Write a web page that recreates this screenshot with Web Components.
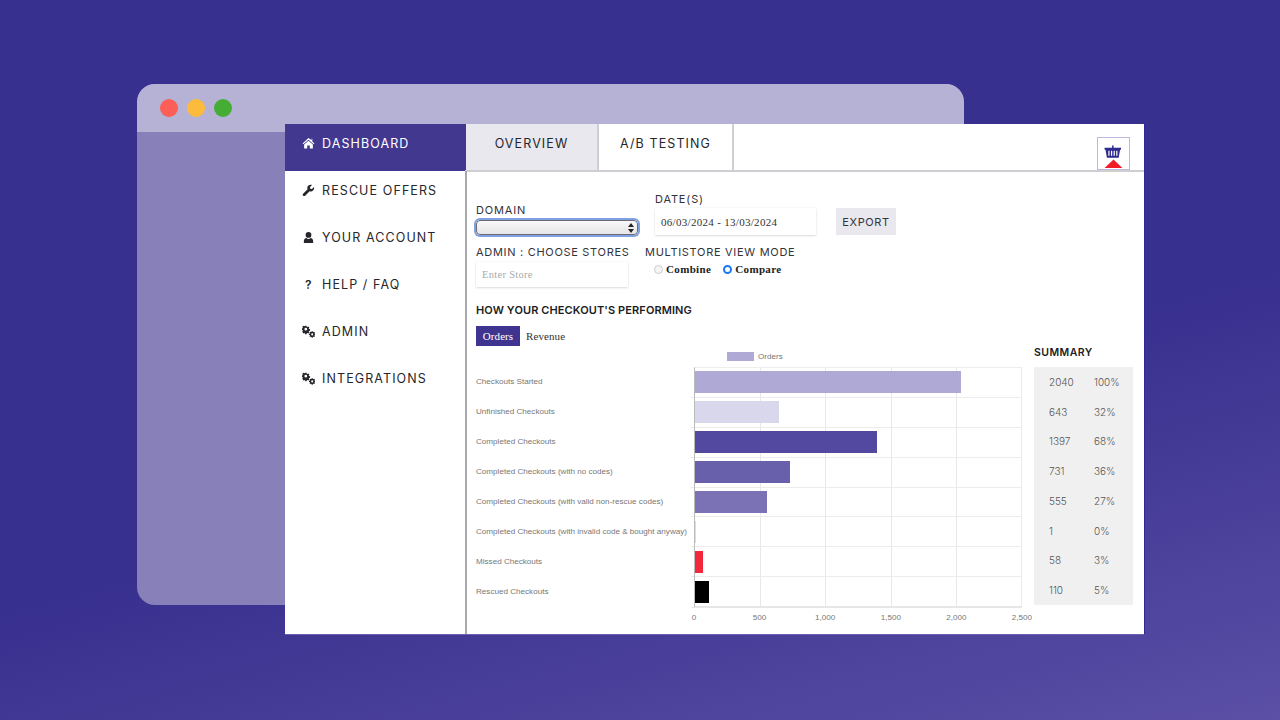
<!DOCTYPE html>
<html><head><meta charset="utf-8">
<style>
html,body{margin:0;padding:0;width:1280px;height:720px;overflow:hidden}
body{background:linear-gradient(165deg,#38308e 0%,#38308e 58%,#5b4fa6 100%);font-family:"Inter","Liberation Sans",sans-serif;position:relative}
</style></head><body>
<desk-window></desk-window>
<app-panel>
  <side-nav slot="side">
    <nav-item active icon="home">DASHBOARD</nav-item>
    <nav-item icon="wrench">RESCUE OFFERS</nav-item>
    <nav-item icon="user">YOUR ACCOUNT</nav-item>
    <nav-item icon="help">HELP / FAQ</nav-item>
    <nav-item icon="cogs">ADMIN</nav-item>
    <nav-item icon="cogs">INTEGRATIONS</nav-item>
  </side-nav>
  <top-tabs slot="tabs"></top-tabs>
  <filter-form slot="main"></filter-form>
  <perf-report slot="main"></perf-report>
</app-panel>
<script>
function el(name,html,cls){customElements.define(name,class extends HTMLElement{
  constructor(){super();this.attachShadow({mode:'open'}).innerHTML=html;}
  connectedCallback(){if(cls)cls.call(this);}
});}
const ICONS={
home:'<path d="M7 1.2 .6 6.9l.8.9L7 3l5.6 4.8.8-.9-2.3-2V1.8H10.300v1.800z"/><path d="M7 4 2.300 8v4.300h3.300V9.200h2.800v3.100h3.300V8z"/>',
wrench:'<path d="M12.900 3.200 10.700 5.300 8.900 5 8.600 3.200 10.800 1.100C9.300.5 7.600.9 6.600 2 5.700 3 5.500 4.400 6 5.600L1.200 10.400c-.6.6-.6 1.600 0 2.200s1.600.6 2.200 0L8.200 7.800c1.200.5 2.700.3 3.700-.7 1.100-1.100 1.400-2.600 1-3.900z"/>',
user:'<circle cx="7" cy="4.300" r="3.100"/><path d="M2 12.900V10.800C2 9 3.300 7.800 4.700 7.600 5.300 8.200 6.100 8.500 7 8.500s1.700-.3 2.300-.9C10.700 7.800 12 9 12 10.800v2.100z"/>',
cogs:'<path fill-rule="evenodd" d="M3.300.8h1.600l.2 1.100.8.3.9-.6 1.100 1.100-.6.900.3.800 1.100.2v1.600l-1.100.2-.3.800.6.900-1.100 1.100-.9-.6-.8.300-.2 1.100H3.300l-.2-1.100-.8-.3-.9.6L.3 7.200l.6-.9-.3-.8L-.5 5.300V3.700l1.100-.2.3-.8-.6-.9L1.400.7l.9.6.8-.3zM4.100 3A1.500 1.500 0 1 0 4.100 6 1.500 1.500 0 0 0 4.100 3z"/><path fill-rule="evenodd" d="M10.400 6.600h1.200l.2.800.6.200.7-.4.8.8-.4.700.2.600.8.200v1.200l-.8.2-.2.600.4.700-.8.800-.7-.4-.6.200-.2.800h-1.200l-.2-.8-.6-.2-.7.400-.8-.8.400-.7-.2-.6-.8-.2V9.500l.8-.2.200-.6-.4-.7.8-.8.7.4.6-.2zM11 9a1.100 1.100 0 1 0 0 2.200A1.100 1.100 0 0 0 11 9z"/>'
};
el('desk-window',`<style>
:host{display:block;position:absolute;left:137px;top:84px;width:827px;height:521px;border-radius:18px;overflow:hidden;background:#8880b8}
.bar{height:48px;background:#b5b2d6;display:flex;align-items:center;gap:9px;padding-left:23px;box-sizing:border-box}
i{display:block;width:18px;height:18px;border-radius:50%}
</style><div class="bar"><i style="background:#fc5f57"></i><i style="background:#fdbb3c"></i><i style="background:#45ad34"></i></div>`);

el('app-panel',`<style>
:host{display:grid;position:absolute;left:285px;top:124px;width:859px;height:510px;background:#fff;grid-template-columns:180px 1fr;grid-template-rows:47px 1fr;box-shadow:1px 0 0 #2e2898,0 1px 0 #6a5fb0}
.side{grid-row:1 / 3}
.tabs{border-bottom:2px solid #cfcfd3;box-sizing:content-box;height:46px}
.main{border-left:2px solid #a9a9ad;padding:0 10px 0 9px;min-width:0}
</style><div class="side"><slot name="side"></slot></div><div class="tabs"><slot name="tabs"></slot></div><div class="main"><slot name="main"></slot></div>`);

el('side-nav',`<style>:host{display:block}</style><slot></slot>`);

customElements.define('nav-item',class extends HTMLElement{
 constructor(){super();const a=this.attachShadow({mode:'open'});
  const n=this.getAttribute('icon');
  const ic=n==='help'?'<span class="q">?</span>':`<svg viewBox="0 0 14 14" width="13" height="13" fill="currentColor">${ICONS[n]}</svg>`;
  a.innerHTML=`<style>
  :host{display:flex;align-items:center;height:47px;padding:0 0 8px 17px;color:#26262c;font:400 12.500px "Inter","Liberation Sans",sans-serif;letter-spacing:1.100px;box-sizing:border-box;width:181px}
  :host([active]){background:#43388f;color:#fff}
  .ic{width:20px;display:flex;align-items:center;justify-content:flex-start;flex:none}
  .q{font-size:12px;font-weight:600;padding-left:3px;letter-spacing:0}
  </style><span class="ic">${ic}</span><slot></slot>`;}
});

el('top-tabs',`<style>
:host{display:flex;height:46px;position:relative}
.t{display:flex;align-items:center;justify-content:center;padding-bottom:8px;font:400 12.500px "Inter","Liberation Sans",sans-serif;letter-spacing:1.100px;color:#26262c;border-right:2px solid #cfcfd3;box-sizing:border-box}
.a{width:133px;background:#e8e8ee;margin-left:1px}
.b{width:135px}
.logo{position:absolute;right:14px;top:13px;width:33px;height:33px;box-sizing:border-box;border:1px solid #bcb9de;overflow:hidden;background:#fff}
</style><div class="t a">OVERVIEW</div><div class="t b">A/B TESTING</div>
<div class="logo"><svg viewBox="0 0 33 33" width="31" height="31"><path d="M15 8h1.600v3H15z" fill="#2e2a8e"/><path d="M7 10.500h17.500v2H23.500l-1.500 8.500H9.500L8 12.500H7z" fill="#2e2a8e"/><path d="M11 13.500h1.300v5.500H11zM13.800 13.500h1.300v5.500h-1.300zM16.600 13.500h1.300v5.500h-1.300zM19.400 13.500h1.300v5.500h-1.300z" fill="#fff"/><path d="M16.500 23l9.500 9H7z" fill="#f31b2a"/></svg></div>`);

el('filter-form',`<style>
:host{display:block;font:400 11px "Inter","Liberation Sans",sans-serif;letter-spacing:.85px;color:#33333a}
.r1{display:flex;align-items:flex-end;padding-top:21px;height:43px}
.r2{display:flex;padding-top:10px;letter-spacing:.7px}
.l{display:block;white-space:nowrap}
.sel{width:162px;height:15px;box-sizing:border-box;border:1px solid #6a6a78;border-radius:4px;background:linear-gradient(#f8f8f8,#e6e6e6);box-shadow:0 0 0 2px #7fa1df;margin-top:3px;position:relative}
.sel svg{position:absolute;right:3px;top:2px}
.d{margin-left:17px;width:161px}
.in{box-sizing:border-box;background:#fff;box-shadow:0 1px 2px rgba(0,0,0,.13),0 0 2px rgba(0,0,0,.05);font:400 11px "Liberation Serif",serif;letter-spacing:.3px;color:#333;display:flex;align-items:center;padding:0 6px}
.date{height:27px;margin-top:2px}
.x{margin-left:20px;width:60px;height:27px;background:#e8e8ee;display:flex;align-items:center;justify-content:center;font-size:11px;letter-spacing:.6px}
.store{margin-top:3px;width:152px;height:25px;color:#aaa;font-size:10.500px}
.m{margin-left:17px}
.rad{display:flex;align-items:center;font:700 11px "Liberation Serif",serif;letter-spacing:.35px;color:#222;margin:4px 0 0 9px;height:12px}
.c{width:9px;height:9px;border-radius:50%;box-sizing:border-box;margin-right:3px}
</style>
<div class="r1">
 <div><span class="l">DOMAIN</span><div class="sel"><svg width="6" height="10" viewBox="0 0 6 10"><path d="M3 0 6 4H0zM3 10 0 6h6z" fill="#222"/></svg></div></div>
 <div class="d"><span class="l">DATE(S)</span><div class="in date">06/03/2024 - 13/03/2024</div></div>
 <div class="x">EXPORT</div>
</div>
<div class="r2">
 <div style="width:152px"><span class="l">ADMIN : CHOOSE STORES</span><div class="in store">Enter Store</div></div>
 <div class="m"><span class="l">MULTISTORE VIEW MODE</span>
  <div class="rad"><span class="c" style="border:1px solid #ccc;background:#f5f5f5"></span>Combine<span class="c" style="margin-left:12px;border:2.500px solid #1b78f0;background:#fff"></span>Compare</div>
 </div>
</div>`);

el('perf-report',`<style>
:host{display:block;position:relative}
h2{font:600 11px "Inter","Liberation Sans",sans-serif;letter-spacing:.1px;color:#1c1c22;margin:0;padding-top:16px;line-height:14px}
.sw{display:flex;margin-top:9px;height:20px;font:400 11px "Liberation Serif",serif;letter-spacing:.1px;align-items:center;color:#333}
.sw b{font-weight:400;width:44px;height:20px;background:#3f3490;color:#fff;display:flex;align-items:center;justify-content:center}
.sw span{margin-left:6px}
.body{display:flex}
.chart{width:556px;flex:none}
.leg{height:21px;display:flex;align-items:center;padding-left:251px;font:400 8.100px "Liberation Sans",sans-serif;color:#777}
.leg i{width:27px;height:9px;background:#afaad5;margin-right:4px}
.sum{margin-left:2px;width:99px}
h3{font:600 10.500px "Inter","Liberation Sans",sans-serif;letter-spacing:.45px;color:#1c1c22;margin:0;height:21px;box-sizing:border-box;padding-bottom:8px;display:flex;align-items:center}
.box{background:#f0f0f0;height:238px;display:grid;grid-template-rows:repeat(8,1fr)}
.row{display:grid;grid-template-columns:45px 1fr;padding-left:15px;align-items:center;font:300 10px "Inter","Liberation Sans",sans-serif;color:#555}
.plotrow{display:flex}
.labs{width:218px;font:400 8.100px "Liberation Sans",sans-serif;color:#777;display:grid;grid-template-rows:repeat(8,29.900px);height:239px;white-space:nowrap;flex:none}
.labs div{display:flex;align-items:center;height:29.900px}
.plot{width:328px;height:241px;position:relative;display:grid;grid-template-rows:repeat(8,29.900px);border-left:1px solid #bbb;border-right:1px solid #ececec;border-top:1px solid #eee;border-bottom:2px solid #e6e6e6;box-sizing:border-box;
 background-image:repeating-linear-gradient(90deg,transparent 0 64.600px,#e8e8e8 64.600px 65.600px)}
.plot div{display:flex;align-items:center;position:relative;border-bottom:1px solid #ececec;box-sizing:border-box}
.plot div:last-child{border-bottom:0}
.plot div::before{content:"";position:absolute;left:-4px;bottom:-1px;width:3px;height:1px;background:#ececec}
.plot i{display:block;height:22px}
.ax{display:flex;position:relative;height:22px;margin-left:218px;width:328px;font:400 8.100px "Liberation Sans",sans-serif;color:#777}
.ax span{position:absolute;top:5px;transform:translateX(-50%)}
</style>
<h2>HOW YOUR CHECKOUT'S PERFORMING</h2>
<div class="sw"><b>Orders</b><span>Revenue</span></div>
<div class="body">
 <div class="chart">
  <div class="leg"><i></i>Orders</div>
  <div class="plotrow"><div class="labs" id="labs"></div><div class="plot" id="plot"></div></div>
  <div class="ax" id="ax"></div>
 </div>
 <div class="sum"><h3>SUMMARY</h3><div class="box" id="box"></div></div>
</div>`,function(){
 const D=[['Checkouts Started',2040,'100%','#afaad5'],['Unfinished Checkouts',643,'32%','#d9d7eb'],['Completed Checkouts',1397,'68%','#5349a0'],['Completed Checkouts (with no codes)',731,'36%','#6960ac'],['Completed Checkouts (with valid non-rescue codes)',555,'27%','#7a72b5'],['Completed Checkouts (with invalid code &amp; bought anyway)',1,'0%','#ddd'],['Missed Checkouts',58,'3%','#f3283b'],['Rescued Checkouts',110,'5%','#000']];
 const s=this.shadowRoot;
 s.getElementById('labs').innerHTML=D.map(d=>`<div>${d[0]}</div>`).join('');
 s.getElementById('plot').innerHTML=D.map(d=>`<div><i style="width:${d[1]/2500*100}%;background:${d[3]}"></i></div>`).join('');
 s.getElementById('box').innerHTML=D.map(d=>`<div class="row"><span>${d[1]}</span><span>${d[2]}</span></div>`).join('');
 s.getElementById('ax').innerHTML=['0','500','1,000','1,500','2,000','2,500'].map((t,i)=>`<span style="left:${i*20}%">${t}</span>`).join('');
});
</script>
</body></html>
